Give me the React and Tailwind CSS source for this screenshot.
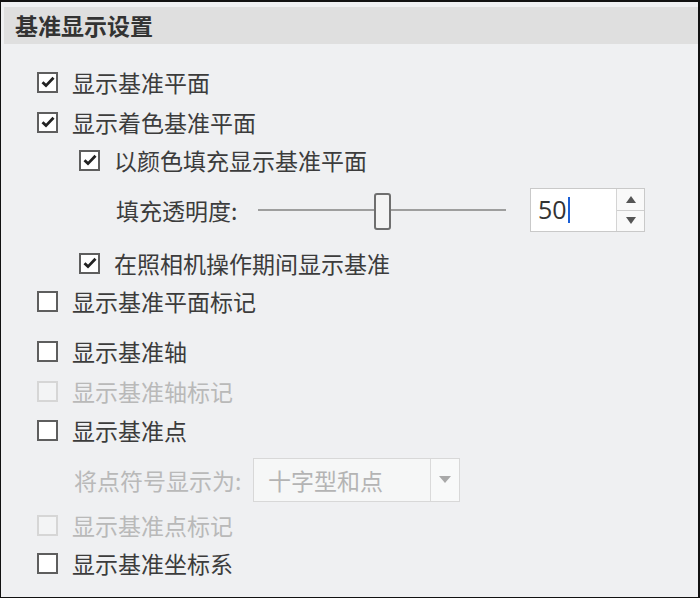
import React from "react";

const font = { fontFamily: '"Noto Sans CJK SC", "Noto Sans", sans-serif' };

function CheckBox({ checked, disabled }) {
  return (
    <span
      className={
        "flex h-[21px] w-[21px] shrink-0 items-center justify-center border-2 " +
        (disabled ? "border-[#d6d6d6] bg-[#f3f4f5]" : "border-[#5e5e5e] bg-white")
      }
    >
      {checked && (
        <svg width="14" height="12" viewBox="0 0 14 12">
          <path d="M1.5 6.2 L5 9.6 L12.5 1.8" fill="none" stroke="#222" strokeWidth="2.8" />
        </svg>
      )}
    </span>
  );
}

function Row({ label, checked, disabled, indent, className = "" }) {
  return (
    <div className={"flex h-[38px] items-center " + (indent ? "pl-[78px] " : "pl-[36px] ") + className}>
      <CheckBox checked={checked} disabled={disabled} />
      <span className={"ml-[14px] text-[23px] " + (disabled ? "text-[#b9b9b9]" : "text-[#3c3c3c]")}>{label}</span>
    </div>
  );
}

export default function App() {
  return (
    <div
      style={font}
      className="h-[598px] w-[700px] overflow-hidden border-t-2 border-r-2 border-b border-l border-[#111] bg-[#eff0f2]"
    >
      {/* Header */}
      <div className="pt-[5px] pl-[3px]">
        <div className="flex h-[37px] items-center bg-[#dfdfdf] pl-[11px]">
          <span className="text-[23px] font-bold text-[#333]">基准显示设置</span>
        </div>
      </div>

      <div className="pt-[19px]">
        <Row label="显示基准平面" checked />
        <Row label="显示着色基准平面" checked className="mt-[2px]" />
        <Row label="以颜色填充显示基准平面" checked indent />

        {/* Slider */}
        <div className="mt-[9px] flex h-[44px] items-center pl-[115px]">
          <span className="w-[142px] text-[23px] text-[#3c3c3c]">填充透明度:</span>
          <div className="relative flex h-[44px] w-[248px] items-center">
            <div className="h-[2px] w-full bg-[#9e9e9e]" />
            <div className="absolute left-[116px] top-[5px] h-[37px] w-[17px] rounded-[3px] border-2 border-[#6f6f6f] bg-[#f4f4f4]" />
          </div>
          <div className="ml-[24px] flex h-[44px] w-[115px] border border-[#c9c9c9] bg-white">
            <div className="flex flex-1 items-center pl-[7px]">
              <span className="text-[25px] text-[#333]" style={{ fontFamily: '"Open Sans", "Noto Sans", sans-serif' }}>50</span>
              <span className="ml-[1px] h-[26px] w-[2px] bg-[#1a5fd6]" />
            </div>
            <div className="flex w-[28px] flex-col border-l border-[#d4d4d4] bg-[#f9f9f9]">
              <div className="flex flex-1 items-center justify-center border-b border-[#cfcfcf]">
                <svg width="10" height="7" viewBox="0 0 10 7"><path d="M5 0 L10 7 L0 7 Z" fill="#555" /></svg>
              </div>
              <div className="flex flex-1 items-center justify-center">
                <svg width="10" height="7" viewBox="0 0 10 7"><path d="M0 0 L10 0 L5 7 Z" fill="#555" /></svg>
              </div>
            </div>
          </div>
        </div>

        <Row label="在照相机操作期间显示基准" checked indent className="mt-[12px]" />
        <Row label="显示基准平面标记" />
        <Row label="显示基准轴" className="mt-[12px]" />
        <Row label="显示基准轴标记" disabled className="mt-[2px]" />
        <Row label="显示基准点" className="mt-[1px]" />

        {/* Dropdown */}
        <div className="mt-[9px] flex h-[44px] items-center pl-[73px]">
          <span className="w-[179px] text-[23px] text-[#b9b9b9]">将点符号显示为:</span>
          <div className="flex h-[44px] w-[207px] border border-[#d8d8d8] bg-[#f6f7f7]">
            <div className="flex flex-1 items-center pl-[14px]">
              <span className="text-[23px] text-[#b4b4b4]">十字型和点</span>
            </div>
            <div className="flex w-[29px] items-center justify-center border-l border-[#dadada] bg-[#f8f9f9]">
              <svg width="12" height="8" viewBox="0 0 12 8"><path d="M0 0 L12 0 L6 7 Z" fill="#a9a9a9" /></svg>
            </div>
          </div>
        </div>

        <Row label="显示基准点标记" disabled className="mt-[4px]" />
        <Row label="显示基准坐标系" />
      </div>
    </div>
  );
}
